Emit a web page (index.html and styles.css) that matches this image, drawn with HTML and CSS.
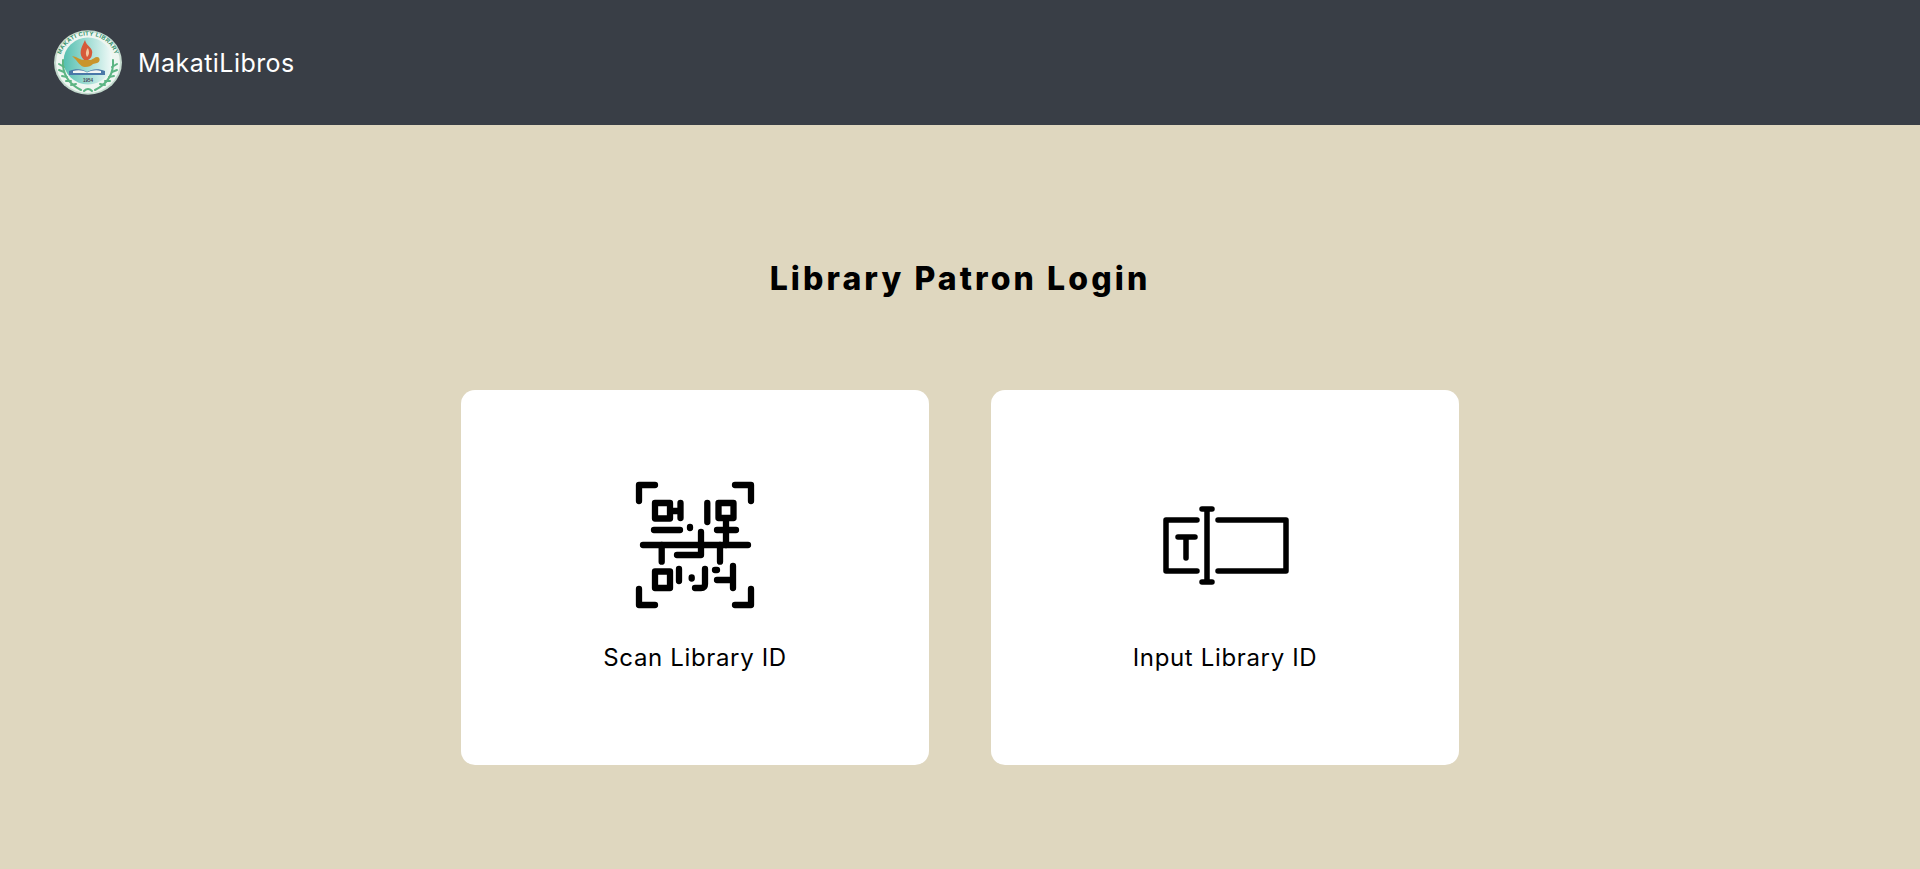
FILE: index.html
```html
<!DOCTYPE html>
<html lang="en">
<head>
<meta charset="utf-8">
<title>MakatiLibros</title>
<link rel="stylesheet" href="styles.css">
</head>
<body>
<header class="topbar">
  <svg class="logo" viewBox="0 0 68 65" aria-hidden="true">
    <defs>
      <linearGradient id="disc" x1="0" x2="1" y1="0" y2="0">
        <stop offset="0" stop-color="#55bfb0"/>
        <stop offset="0.55" stop-color="#a9e0d8"/>
        <stop offset="1" stop-color="#f2faf8"/>
      </linearGradient>
      <path id="arc" d="M5.500 33 A28.500 27.500 0 0 1 62.500 33"/>
    </defs>
    <ellipse cx="34" cy="32.500" rx="34" ry="32.300" fill="#c3d9cd"/>
    <ellipse cx="34" cy="32.500" rx="32" ry="30.500" fill="#eef6f1"/>
    <ellipse cx="34" cy="31" rx="24.500" ry="23.500" fill="url(#disc)"/>
    <text class="logo-ring"><textPath href="#arc" startOffset="50%" text-anchor="middle">MAKATI CITY LIBRARY</textPath></text>
    <path d="M9 30 C8 44 15 54 27 60" class="wreath"/>
    <path d="M59 30 C60 44 53 54 41 60" class="wreath"/>
    <path d="M5 34 l5 3 M5 40 l5 2 M8 46 l5 1 M12 51 l5 0 M17 55 l5 -1 M63 34 l-5 3 M63 40 l-5 2 M60 46 l-5 1 M56 51 l-5 0 M51 55 l-5 -1" class="wreath"/>
    <path d="M30 30 C24 24 27 18 31 10 C32 16 40 18 38 24 C38 27 36 29 34 30 Z" fill="#d65a3a"/>
    <path d="M33 27 C31 24 32 20 34 18 C35 21 36 24 33 27 Z" fill="#f3c8a0"/>
    <path d="M18 26 C24 27 26 30 30 30 L37 30 C39 29 41 27 43 27 C46.500 27 46.500 32 43 33 L39 34 C37 36 35 37 31 37 C26 37 24 31 18 26 Z" fill="#c9952c"/>
    <path d="M15 41 C22 38 29 39 33 42 C38 39 44 38 51 41 L51 45 L15 45 Z" fill="#4a78a8"/>
    <path d="M19 41 C24 39.500 29 40 33 42.500 C38 40 43 39.500 47 41 L47 43 L19 43 Z" fill="#f4f6f4"/>
    <text class="logo-year" x="34" y="51.500" text-anchor="middle">1954</text>
    <path d="M30 61 Q34 57 38 61" class="wreath"/>
  </svg>
  <span class="brand">MakatiLibros</span>
</header>
<main class="content">
  <h1 class="title">Library Patron Login</h1>
  <section class="cards">
    <a class="card" href="#">
      <svg class="icon icon-qr" width="150" height="150" viewBox="0 0 150 150" aria-hidden="true">
        <path d="M19 31V15H35M115 15H131V31M19 119V135H35M115 135H131V119"/>
        <path d="M35 33H50V48.500H35ZM50 41H60.500M60.500 33V48M87.300 33V52"/>
        <path d="M98.500 33H113.500V48H98.500ZM106 48V75M97 60H116"/>
        <path d="M34 60H60M70 57V58M81 62V85H57M23 75H128"/>
        <path d="M41.700 75V91.700M100 75V91.700"/>
        <path d="M35 101.500H50V118H35ZM59 99V111M71.700 107.500V108.500M85 99V114Q85 118 81 118H75M95 100H97M113 96V118M97 110H113"/>
      </svg>
      <span class="card-label">Scan Library ID</span>
    </a>
    <a class="card" href="#">
      <svg class="icon icon-text" width="150" height="100" viewBox="0 0 150 100" aria-hidden="true">
        <path d="M47 25H16V76H47M68 25H136V76H68"/>
        <path d="M28 42H45M36 42V63"/>
        <path d="M57 14V87M52 14H62M52 87H62"/>
      </svg>
      <span class="card-label">Input Library ID</span>
    </a>
  </section>
</main>
</body>
</html>
```
FILE: styles.css
```css
* { box-sizing: border-box; }
html, body { height: 100%; }
body {
  margin: 0;
  background: #dfd7bf;
  color: #000;
  font-family: Inter, "Liberation Sans", sans-serif;
  overflow: hidden;
}
.topbar {
  height: 125px;
  background: #393e46;
  display: flex;
  align-items: center;
  padding-left: 54px;
  gap: 16px;
}
.logo { width: 68px; height: 65px; flex: none; }
.logo-ring { font: 700 5.800px "Liberation Sans", sans-serif; fill: #2f8f68; letter-spacing: .35px; }
.logo-year { font: 700 4.500px "Liberation Sans", sans-serif; fill: #445; }
.wreath { fill: none; stroke: #5cb583; stroke-width: 2; stroke-linecap: round; }
.brand { color: #fff; font-size: 25px; font-weight: 400; letter-spacing: .45px; }
.content {
  display: flex;
  flex-direction: column;
  align-items: center;
  padding-top: 128px;
}
.title {
  margin: 0;
  font-size: 32px;
  line-height: 52px;
  font-weight: 800;
  letter-spacing: 3.100px;
}
.cards {
  display: flex;
  gap: 62px;
  margin-top: 85px;
}
.card {
  width: 468px;
  height: 375px;
  background: #fff;
  border-radius: 14px;
  display: flex;
  flex-direction: column;
  align-items: center;
  color: #000;
  text-decoration: none;
  padding-top: 80px;
}
.icon {
  fill: none;
  stroke: #000;
  stroke-linecap: round;
  stroke-linejoin: round;
  flex: none;
}
.icon-qr { stroke-width: 6.300; }
.icon-text { stroke-width: 5.500; margin-top: 25px; margin-bottom: 25px; }
.card-label {
  font-size: 24px;
  line-height: 36px;
  margin-top: 20px;
  letter-spacing: .650px;
}
```
